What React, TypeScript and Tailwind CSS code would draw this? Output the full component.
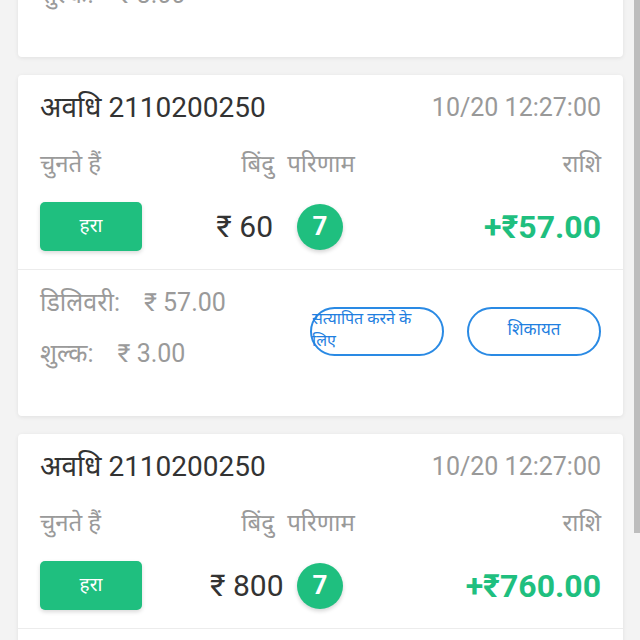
import React from 'react'

type Order = {
  period: string
  time: string
  pick: string
  point: string
  result: string
  amount: string
  delivery: string
  fee: string
}

const orders: Order[] = [
  { period: '2110200250', time: '10/20 12:27:00', pick: 'हरा', point: '₹ 60', result: '7', amount: '+₹57.00', delivery: '₹ 57.00', fee: '₹ 3.00' },
  { period: '2110200250', time: '10/20 12:27:00', pick: 'हरा', point: '₹ 60', result: '7', amount: '+₹57.00', delivery: '₹ 57.00', fee: '₹ 3.00' },
  { period: '2110200250', time: '10/20 12:27:00', pick: 'हरा', point: '₹ 800', result: '7', amount: '+₹760.00', delivery: '₹ 760.00', fee: '₹ 40.00' },
]

function OrderCard({ order }: { order: Order }) {
  return (
    <div className="bg-white rounded-[4px] shadow-[0_1px_4px_rgba(0,0,0,0.08)] h-[341px] flex-shrink-0 overflow-hidden">
      {/* Header */}
      <div className="px-[22px] pt-[14px]">
        <div className="h-[38px] flex items-center justify-between">
          <span className="text-[28px] text-[#333]">अवधि {order.period}</span>
          <span className="text-[25px] text-[#999]">{order.time}</span>
        </div>

        {/* Labels */}
        <div className="mt-[19px] h-[36px] flex items-center text-[24px] text-[#9a9a9a]">
          <div className="w-[170px]">चुनते हैं</div>
          <div className="w-[64px] text-right">बिंदु</div>
          <div className="w-[94px] text-center">परिणाम</div>
          <div className="flex-1 text-right">राशि</div>
        </div>

        {/* Values */}
        <div className="mt-[20px] h-[49px] flex items-center">
          <div className="w-[170px]">
            <div className="w-[102px] h-[49px] rounded-[5px] bg-[#1fbf7f] shadow-[0_2px_4px_rgba(0,0,0,0.15)] flex items-center justify-center text-white text-[19px]">
              {order.pick}
            </div>
          </div>
          <div className="w-[63px] text-right text-[30px] text-[#333] whitespace-nowrap">{order.point}</div>
          <div className="w-[94px] flex justify-center">
            <div className="w-[46px] h-[46px] rounded-full bg-[#1fbf7f] shadow-[0_2px_4px_rgba(0,0,0,0.18)] flex items-center justify-center text-white text-[26px] font-bold">
              {order.result}
            </div>
          </div>
          <div className="flex-1 text-right text-[32px] font-bold text-[#1fbf7f]">{order.amount}</div>
        </div>
      </div>

      <div className="mt-[18px] h-px bg-[#ececec]" />

      {/* Details */}
      <div className="px-[22px] pt-[16px] flex">
        <div className="flex-1 flex flex-col gap-[17px] text-[25px] text-[#9a9a9a]">
          <div className="h-[34px] flex items-center">
            <span>डिलिवरी:</span>
            <span className="ml-[24px]">{order.delivery}</span>
          </div>
          <div className="h-[34px] flex items-center">
            <span>शुल्क:</span>
            <span className="ml-[24px]">{order.fee}</span>
          </div>
        </div>
        <div className="mt-[21px] flex gap-[23px] self-start">
          <div className="w-[134px] h-[49px] rounded-full border-2 border-[#2a8ae4] text-[#1f7fe0] text-[16px] leading-[22px] text-left">
            <div className="w-[122px] -mt-[1px]">सत्यापित करने के लिए</div>
          </div>
          <div className="w-[134px] h-[49px] rounded-full border-2 border-[#2a8ae4] text-[#1f7fe0] text-[17px] flex items-center justify-center pb-[4px]">
            शिकायत
          </div>
        </div>
      </div>
    </div>
  )
}

export default function App() {
  return (
    <div className="w-[640px] h-[640px] overflow-hidden bg-[#f3f3f3] flex font-[Roboto,'Noto_Sans','Noto_Sans_Devanagari',sans-serif]">
      <div className="w-[634px] pl-[18px] pr-[11px] flex flex-col gap-[18px] -mt-[284px]">
        {orders.map((o, i) => (
          <OrderCard key={i} order={o} />
        ))}
      </div>
      {/* Scrollbar */}
      <div className="w-[6px]">
        <div className="h-[533px] bg-[#bdbdbd]" />
      </div>
    </div>
  )
}
